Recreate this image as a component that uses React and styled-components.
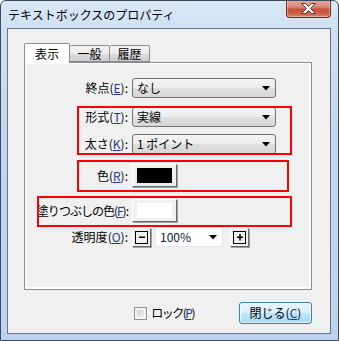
import React from 'react';
import styled, { createGlobalStyle } from 'styled-components';

const GlobalStyle = createGlobalStyle`
  html, body {
    margin: 0;
    padding: 0;
    background: #ffffff;
  }
  body {
    font-family: "Noto Sans CJK JP", "Liberation Sans", sans-serif;
    font-size: 12px;
    color: #000;
  }
`;

const Key = ({ k }) => (
  <>
    (<U>{k}</U>)
  </>
);

const Arrow = () => (
  <svg width="8" height="5" viewBox="0 0 8 5">
    <path d="M0 0 H8 L4 4.5 Z" fill="#000" />
  </svg>
);

export default () => {
  return (
    <>
      <GlobalStyle />
      <Window>
        <TitleBar>
          <Title>テキストボックスのプロパティ</Title>
          <CloseButton>
            <svg width="17" height="11" viewBox="0 0 17 11">
              <path
                d="M1.5 0.5 H5.5 L8.5 3.5 L11.5 0.5 H15.5 L10.5 5.5 L15.5 10.5 H11.5 L8.5 7.5 L5.5 10.5 H1.5 L6.5 5.5 Z"
                fill="#fff"
                stroke="#5a3a36"
                strokeWidth="1"
              />
            </svg>
          </CloseButton>
        </TitleBar>
        <Client>
          <TabStrip>
            <Tab $active>表示</Tab>
            <Tab>一般</Tab>
            <Tab>履歴</Tab>
          </TabStrip>
          <Panel>
            <Row $mt={15}>
              <Label>
                終点<Key k="E" />:
              </Label>
              <Combo>
                <span>なし</span>
                <Arrow />
              </Combo>
            </Row>
            <Row $mt={9}>
              <Label>
                形式<Key k="T" />:
              </Label>
              <Combo>
                <span>実線</span>
                <Arrow />
              </Combo>
            </Row>
            <Row $mt={7}>
              <Label>
                太さ<Key k="K" />:
              </Label>
              <Combo>
                <span>1 ポイント</span>
                <Arrow />
              </Combo>
            </Row>
            <Row $mt={10} $h={23}>
              <Label>
                色<Key k="R" />:
              </Label>
              <ColorButton>
                <Swatch $color="#000000" />
              </ColorButton>
            </Row>
            <Row $mt={12} $h={23}>
              <Label $tight>
                塗りつぶしの色<Key k="F" />:
              </Label>
              <ColorButton>
                <Swatch $color="#ffffff" />
              </ColorButton>
            </Row>
            <Row $mt={5}>
              <Label>
                透明度<Key k="O" />:
              </Label>
              <Stepper>
                <StepButton>
                  <StepBox>
                    <svg width="10" height="10" viewBox="0 0 10 10">
                      <path d="M2 4.5 H8 V6 H2 Z" fill="#000" />
                    </svg>
                  </StepBox>
                </StepButton>
                <PercentCombo>
                  <span>100%</span>
                  <Arrow />
                </PercentCombo>
                <StepButton>
                  <StepBox>
                    <svg width="10" height="10" viewBox="0 0 10 10">
                      <path d="M2 4.5 H8 V6 H2 Z M4.25 2 H5.75 V8.5 H4.25 Z" fill="#000" />
                    </svg>
                  </StepBox>
                </StepButton>
              </Stepper>
            </Row>

            <Marker $top={43} $left={52} $w={215} $h={49} />
            <Marker $top={97} $left={52} $w={212} $h={32} />
            <Marker $top={133} $left={12} $w={255} $h={31} />
          </Panel>
          <Footer>
            <CheckLabel>
              <CheckBox />
              ロック<Key k="P" />
            </CheckLabel>
            <CloseDialogButton>
              閉じる<Key k="C" />
            </CloseDialogButton>
          </Footer>
        </Client>
      </Window>
    </>
  );
};

const Window = styled.div`
  width: 339px;
  height: 341px;
  box-sizing: border-box;
  border: 1px solid #3b4a5c;
  border-radius: 6px 6px 0 0;
  background: linear-gradient(180deg, #dbe8f6 0%, #cfe0f3 8%, #c2d7ef 40%, #bdd3ec 100%);
  padding: 0 7px 6px 6px;
  display: flex;
  flex-direction: column;
  overflow: hidden;
`;

const TitleBar = styled.div`
  height: 27px;
  display: flex;
  justify-content: space-between;
  align-items: flex-start;
  flex-shrink: 0;
`;

const Title = styled.div`
  font-size: 12px;
  line-height: 14px;
  margin-top: 7px;
  margin-left: 1px;
  color: #000;
  white-space: nowrap;
`;

const CloseButton = styled.div`
  width: 45px;
  height: 18px;
  margin-top: -1px;
  box-sizing: border-box;
  border: 1px solid #6e2b23;
  border-top: none;
  border-radius: 0 0 4px 4px;
  background: linear-gradient(
    180deg,
    #e9a99a 0%,
    #d98a77 40%,
    #c6523b 55%,
    #c75a42 75%,
    #d88066 100%
  );
  box-shadow: inset 0 0 0 1px rgba(255, 220, 210, 0.45);
  display: flex;
  align-items: center;
  justify-content: center;
`;

const Client = styled.div`
  flex: 1;
  box-sizing: border-box;
  border: 1px solid #64738a;
  background: #f0f0f0;
  padding: 14px 18px 0 16px;
  display: flex;
  flex-direction: column;
`;

const TabStrip = styled.div`
  display: flex;
  align-items: flex-end;
  height: 19px;
  position: relative;
  z-index: 1;
`;

const Tab = styled.div`
  box-sizing: border-box;
  height: ${(p) => (p.$active ? '20px' : '17px')};
  width: ${(p) => (p.$active ? '46px' : '40px')};
  margin-bottom: ${(p) => (p.$active ? '-1px' : '0')};
  border: 1px solid #898c95;
  border-bottom: ${(p) => (p.$active ? 'none' : '1px solid #898c95')};
  border-left: ${(p) => (p.$active ? '1px solid #898c95' : 'none')};
  border-radius: 2px 2px 0 0;
  background: ${(p) =>
    p.$active ? '#ffffff' : 'linear-gradient(180deg, #f3f3f3 0%, #ebebeb 50%, #dddddd 51%, #cfcfcf 100%)'};
  display: flex;
  align-items: center;
  justify-content: center;
  font-size: 12px;
  line-height: 14px;
  padding-top: ${(p) => (p.$active ? '0' : '1px')};
`;

const Panel = styled.div`
  position: relative;
  box-sizing: border-box;
  height: 228px;
  border: 1px solid #898c95;
  background: #f0f0f0;
  box-shadow: inset 1px 1px 0 #ffffff, inset -2px -2px 0 #ffffff;
  display: flex;
  flex-direction: column;
`;

const Row = styled.div`
  display: grid;
  grid-template-columns: 103px auto;
  column-gap: 4px;
  align-items: center;
  height: ${(p) => p.$h || 20}px;
  margin-top: ${(p) => p.$mt}px;
`;

const Label = styled.div`
  display: flex;
  justify-content: flex-end;
  white-space: nowrap;
  font-size: 12px;
  line-height: 14px;
  letter-spacing: ${(p) => (p.$tight ? '-1px' : '0')};
`;

const U = styled.span`
  text-decoration: underline;
  color: #1a3d8f;
`;

const Combo = styled.div`
  box-sizing: border-box;
  width: 144px;
  height: 20px;
  border: 1px solid #707070;
  border-radius: 3px;
  background: linear-gradient(180deg, #f4f4f4 0%, #ececec 50%, #e0e0e0 51%, #d6d6d6 100%);
  display: flex;
  align-items: center;
  justify-content: space-between;
  padding: 0 5px 0 4px;
  font-size: 12px;
  line-height: 14px;
`;

const ColorButton = styled.div`
  box-sizing: border-box;
  width: 45px;
  height: 23px;
  border: 1px solid;
  border-color: #ffffff #696969 #696969 #ffffff;
  box-shadow: 1px 1px 0 #a0a0a0;
  background: #f0f0f0;
  padding: 3px 4px;
`;

const Swatch = styled.div`
  width: 100%;
  height: 100%;
  background: ${(p) => p.$color};
`;

const Stepper = styled.div`
  display: flex;
  align-items: center;
`;

const StepButton = styled.div`
  box-sizing: border-box;
  width: 19px;
  height: 19px;
  border: 1px solid;
  border-color: #ffffff #696969 #696969 #ffffff;
  box-shadow: 1px 1px 0 #a0a0a0;
  background: #f0f0f0;
  display: flex;
  align-items: center;
  justify-content: center;
`;

const StepBox = styled.div`
  box-sizing: border-box;
  width: 13px;
  height: 13px;
  border: 1px solid #000;
  display: flex;
  align-items: center;
  justify-content: center;
`;

const PercentCombo = styled.div`
  box-sizing: border-box;
  width: 68px;
  height: 20px;
  margin: 0 7px 0 4px;
  border: 1px solid #e2e6ea;
  background: #ffffff;
  display: flex;
  align-items: center;
  justify-content: space-between;
  padding: 0 5px 0 4px;
  font-size: 12px;
  line-height: 14px;
  color: #0d1a3a;
`;

const Marker = styled.div`
  position: absolute;
  top: ${(p) => p.$top}px;
  left: ${(p) => p.$left}px;
  width: ${(p) => p.$w}px;
  height: ${(p) => p.$h}px;
  box-sizing: border-box;
  border: 2px solid #ff0000;
  pointer-events: none;
`;

const Footer = styled.div`
  display: flex;
  justify-content: flex-end;
  align-items: center;
  margin-top: 12px;
  height: 22px;
`;

const CheckLabel = styled.div`
  display: flex;
  align-items: center;
  font-size: 12px;
  line-height: 14px;
  letter-spacing: -1.5px;
  margin-right: 45px;
`;

const CheckBox = styled.div`
  box-sizing: border-box;
  width: 13px;
  height: 13px;
  border: 1px solid #8e8f8f;
  background: linear-gradient(135deg, #cbcbcb 0%, #f4f4f4 100%);
  box-shadow: inset 0 0 0 2px #f4f4f4;
  margin-right: 4px;
`;

const CloseDialogButton = styled.div`
  box-sizing: border-box;
  width: 73px;
  height: 22px;
  border: 1px solid #3c7fb1;
  border-radius: 3px;
  background: linear-gradient(180deg, #eaf6fd 0%, #d9f0fc 50%, #bee6fd 51%, #a7d9f5 100%);
  box-shadow: inset 0 0 0 1px rgba(255, 255, 255, 0.7);
  display: flex;
  align-items: center;
  justify-content: center;
  font-size: 12px;
  line-height: 14px;
`;
